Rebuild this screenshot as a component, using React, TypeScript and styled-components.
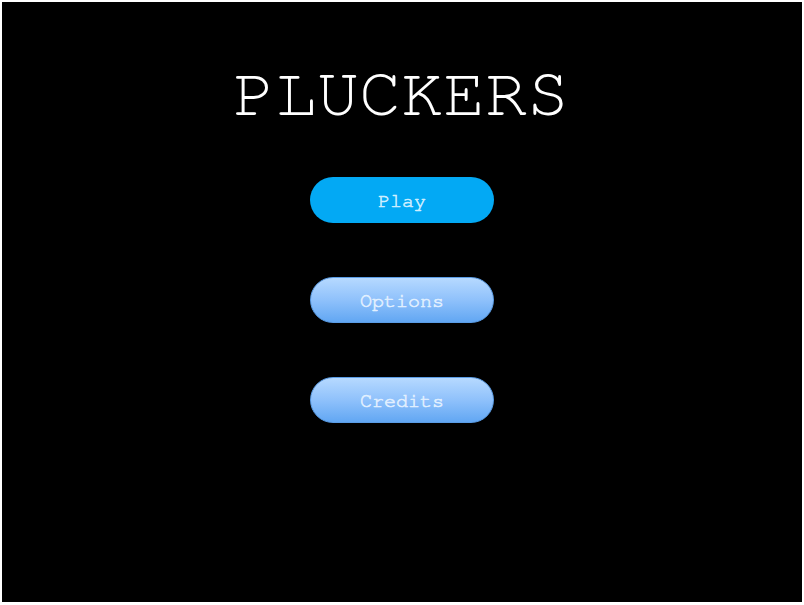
import React from "react";
import styled, { createGlobalStyle } from "styled-components";

const Global = createGlobalStyle`
  html, body { margin: 0; padding: 0; background: #ffffff; }
  body { padding: 2px; }
`;

const mono = `FreeMono, "TeX Gyre Cursor", "Courier New", monospace`;

const Canvas = styled.div`
  width: 800px;
  height: 600px;
  background: #000000;
  display: flex;
  flex-direction: column;
  align-items: center;
  padding-top: 52px;
  box-sizing: border-box;
  font-family: ${mono};
`;

const Title = styled.h1`
  margin: 0 0 43px -2px;
  font-family: ${mono};
  font-weight: normal;
  font-size: 70px;
  line-height: 80px;
  color: #ffffff;
`;

const Menu = styled.div`
  display: flex;
  flex-direction: column;
  align-items: center;
  gap: 54px;
`;

const MenuButton = styled.button<{ $primary?: boolean }>`
  width: 184px;
  height: 46px;
  border-radius: 23px;
  box-sizing: border-box;
  font-family: ${mono};
  font-size: 20px;
  font-weight: normal;
  -webkit-text-stroke: 0.6px currentColor;
  display: flex;
  align-items: center;
  justify-content: center;
  padding: 2px 0 0 0;
  cursor: pointer;
  border: ${(p) => (p.$primary ? "none" : "1px solid #5b9de6")};
  background: ${(p) =>
    p.$primary
      ? "#03a9f4"
      : "linear-gradient(to bottom, #b6d9ff 0%, #8fc1fb 50%, #62a7f3 100%)"};
  color: ${(p) => (p.$primary ? "#cfeeff" : "#e2f0ff")};
`;

export default function App() {
  return (
    <>
      <Global />
      <Canvas>
        <Title>PLUCKERS</Title>
        <Menu>
          <MenuButton $primary>Play</MenuButton>
          <MenuButton>Options</MenuButton>
          <MenuButton>Credits</MenuButton>
        </Menu>
      </Canvas>
    </>
  );
}
